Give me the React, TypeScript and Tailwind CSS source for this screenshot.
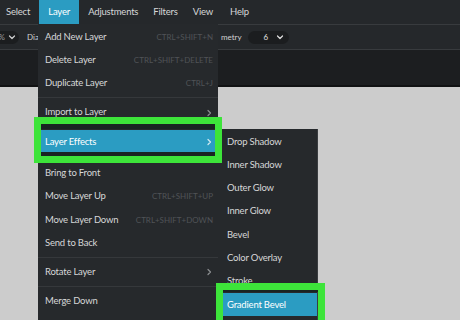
import React from "react";

type Item =
  | { kind: "item"; label: string; shortcut?: string; sub?: boolean; active?: boolean }
  | { kind: "sep"; h: string };

const mainItems: Item[] = [
  { kind: "item", label: "Add New Layer", shortcut: "CTRL+SHIFT+N" },
  { kind: "item", label: "Delete Layer", shortcut: "CTRL+SHIFT+DELETE" },
  { kind: "item", label: "Duplicate Layer", shortcut: "CTRL+J" },
  { kind: "sep", h: "h-[6px]" },
  { kind: "item", label: "Import to Layer", sub: true },
  { kind: "sep", h: "h-[6px]" },
  { kind: "item", label: "Layer Effects", sub: true, active: true },
  { kind: "sep", h: "h-[8px]" },
  { kind: "item", label: "Bring to Front" },
  { kind: "item", label: "Move Layer Up", shortcut: "CTRL+SHIFT+UP" },
  { kind: "item", label: "Move Layer Down", shortcut: "CTRL+SHIFT+DOWN" },
  { kind: "item", label: "Send to Back" },
  { kind: "sep", h: "h-[6px]" },
  { kind: "item", label: "Rotate Layer", sub: true },
  { kind: "sep", h: "h-[6px]" },
  { kind: "item", label: "Merge Down" },
  { kind: "item", label: "Clear Layer" },
];

const effects = [
  "Drop Shadow",
  "Inner Shadow",
  "Outer Glow",
  "Inner Glow",
  "Bevel",
  "Color Overlay",
  "Stroke",
  "Gradient Bevel",
];

function Chevron({ dir = "right", className = "" }: { dir?: "right" | "down"; className?: string }) {
  return (
    <svg width="8" height="8" viewBox="0 0 8 8" className={className} fill="none" stroke="currentColor" strokeWidth="1.2" strokeLinecap="round" strokeLinejoin="round">
      {dir === "right" ? <polyline points="3,1.5 5.5,4 3,6.5" /> : <polyline points="1.5,3 4,5.5 6.5,3" />}
    </svg>
  );
}

export default function App() {
  return (
    <div className="relative w-[460px] h-[320px] overflow-hidden bg-[#cccccc] font-['Lato',sans-serif] text-[#d6d7d8]">
      {/* Menubar */}
      <div className="h-[25px] bg-[#25282b] border-b border-[#383b3e] flex items-stretch text-[9.5px] tracking-[-0.2px]">
        <span className="px-[6px] flex items-center">Select</span>
        <span className="w-[40px] ml-[3px] bg-[#2b9cc2] text-white flex items-center justify-center">Layer</span>
        <span className="ml-[9px] flex items-center">Adjustments</span>
        <span className="ml-[15px] flex items-center">Filters</span>
        <span className="ml-[15px] flex items-center">View</span>
        <span className="ml-[17px] flex items-center">Help</span>
      </div>

      {/* Toolbar */}
      <div className="h-[25px] bg-[#25282b] border-b border-[#383b3e] flex items-center text-[8px]">
        <div className="h-[13px] w-[21px] -ml-[2px] rounded-r-full bg-[#1b1d1f] flex items-center justify-end pr-[3px] gap-[3px] text-[#9a9c9e]">
          <span>%</span>
          <Chevron dir="down" className="text-[#cfd0d1]" />
        </div>
        <span className="ml-[8px] text-[#cfd0d1]">Dia</span>
        <span className="ml-[182px] text-[#cfd0d1]">metry</span>
        <div className="ml-[6px] h-[13px] w-[41px] rounded-full bg-[#1b1d1f] flex items-center pl-[16px] gap-[8px] text-[#e0e0e0]">
          <span>6</span>
          <Chevron dir="down" />
        </div>
      </div>

      {/* Dark band */}
      <div className="h-[37px] bg-[#1c1e20] border-b-2 border-[#111213]" />

      {/* Main dropdown */}
      <div className="absolute left-[38px] top-[24px] w-[180px] bg-[#26292c] pt-px">
        {mainItems.map((it, i) =>
          it.kind === "sep" ? (
            <div key={i} className={`${it.h} flex items-center`}>
              <div className="w-full h-px bg-[#35383b]" />
            </div>
          ) : (
            <div
              key={i}
              className={`h-[23.3px] flex items-center justify-between pl-[7px] pr-[5px] text-[9.5px] tracking-[-0.2px] ${
                it.active ? "bg-[#2b9cc2] text-white" : ""
              }`}
            >
              <span>{it.label}</span>
              {it.shortcut && <span className="text-[8px] tracking-normal text-[#505357]">{it.shortcut}</span>}
              {it.sub && <Chevron className={it.active ? "text-[#cfe9f2]" : "text-[#8b8e91]"} />}
            </div>
          )
        )}
      </div>

      {/* Effects submenu */}
      <div className="absolute left-[218px] top-[129px] w-[100px] h-[200px] bg-[#26292c] border-r border-[#3a3d40] pt-px">
        {effects.map((e) => (
          <div
            key={e}
            className={`h-[23.3px] flex items-center pl-[9px] text-[9.5px] tracking-[-0.2px] ${
              e === "Gradient Bevel" ? "bg-[#2b9cc2] text-white" : ""
            }`}
          >
            {e}
          </div>
        ))}
      </div>

      {/* Highlight boxes */}
      <div className="absolute left-[34px] top-[117px] w-[188px] h-[46px] border-[7px] border-[#3de43a]">
        <div className="h-full border-t-[5px] border-b-[4px] border-[#192422]" />
      </div>
      <div className="absolute left-[216px] top-[283px] w-[109px] h-[50px] border-[7px] border-[#3de43a]">
        <div className="h-full border-t-[2px] border-[#192422]" />
      </div>
    </div>
  );
}
